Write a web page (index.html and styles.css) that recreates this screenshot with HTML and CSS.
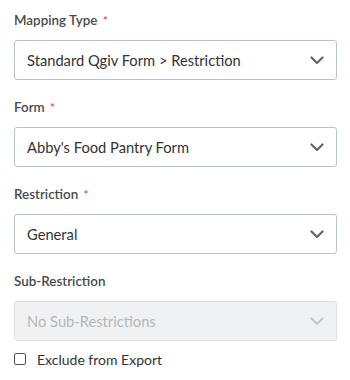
FILE: index.html
```html
<!DOCTYPE html>
<html>
<head>
<meta charset="utf-8">
<link rel="stylesheet" href="styles.css">
</head>
<body>
<div class="form">
  <div class="field">
    <div class="label">Mapping Type <span class="req">*</span></div>
    <div class="select"><span class="value">Standard Qgiv Form &gt; Restriction</span>
      <svg class="chev" width="14" height="9" viewBox="0 0 14 9"><path d="M1.5 1.5 L7 7 L12.5 1.5" fill="none" stroke="currentColor" stroke-width="2.2" stroke-linecap="round" stroke-linejoin="round"/></svg></div>
  </div>
  <div class="field">
    <div class="label">Form <span class="req">*</span></div>
    <div class="select"><span class="value">Abby's Food Pantry Form</span>
      <svg class="chev" width="14" height="9" viewBox="0 0 14 9"><path d="M1.5 1.5 L7 7 L12.5 1.5" fill="none" stroke="currentColor" stroke-width="2.2" stroke-linecap="round" stroke-linejoin="round"/></svg></div>
  </div>
  <div class="field">
    <div class="label">Restriction <span class="req">*</span></div>
    <div class="select"><span class="value">General</span>
      <svg class="chev" width="14" height="9" viewBox="0 0 14 9"><path d="M1.5 1.5 L7 7 L12.5 1.5" fill="none" stroke="currentColor" stroke-width="2.2" stroke-linecap="round" stroke-linejoin="round"/></svg></div>
  </div>
  <div class="field">
    <div class="label">Sub-Restriction</div>
    <div class="select disabled"><span class="value">No Sub-Restrictions</span>
      <svg class="chev" width="14" height="9" viewBox="0 0 14 9"><path d="M1.5 1.5 L7 7 L12.5 1.5" fill="none" stroke="currentColor" stroke-width="2.2" stroke-linecap="round" stroke-linejoin="round"/></svg></div>
  </div>
  <label class="check"><span class="box"></span><span class="check-text">Exclude from Export</span></label>
</div>
</body>
</html>
```
FILE: styles.css
```css
html, body {
  margin: 0;
  padding: 0;
  background: #ffffff;
}
body {
  font-family: "Lato", "Open Sans", sans-serif;
  color: #333333;
}
.form {
  padding: 10px 14px 0 14px;
  width: 323px;
}
.field {
  margin-bottom: 17px;
}
.field:nth-child(4) {
  margin-bottom: 10px;
}
.label {
  height: 20px;
  line-height: 20px;
  font-size: 13.4px;
  font-weight: 600;
  color: #4a4a4a;
  margin-bottom: 10px;
}
.req {
  color: #e0504a;
  font-size: 12px;
  margin-left: 2px;
}
.select {
  box-sizing: border-box;
  height: 40px;
  border: 1px solid #b9c2ca;
  border-radius: 3px;
  display: flex;
  align-items: center;
  justify-content: space-between;
  padding: 0 12px 0 12px;
  font-size: 14.7px;
  color: #333333;
}
.chev {
  color: #5d6770;
}
.select.disabled {
  background: #f0f1f2;
  border-color: #dcdfe2;
  color: #b3b7bb;
}
.select.disabled .chev {
  color: #c3c7cb;
}
.check {
  display: flex;
  align-items: center;
  height: 16px;
}
.box {
  box-sizing: border-box;
  width: 12px;
  height: 12px;
  border: 1px solid #555;
  border-radius: 2px;
  margin-right: 11px;
}
.check-text {
  font-size: 14px;
  color: #333;
}
```
